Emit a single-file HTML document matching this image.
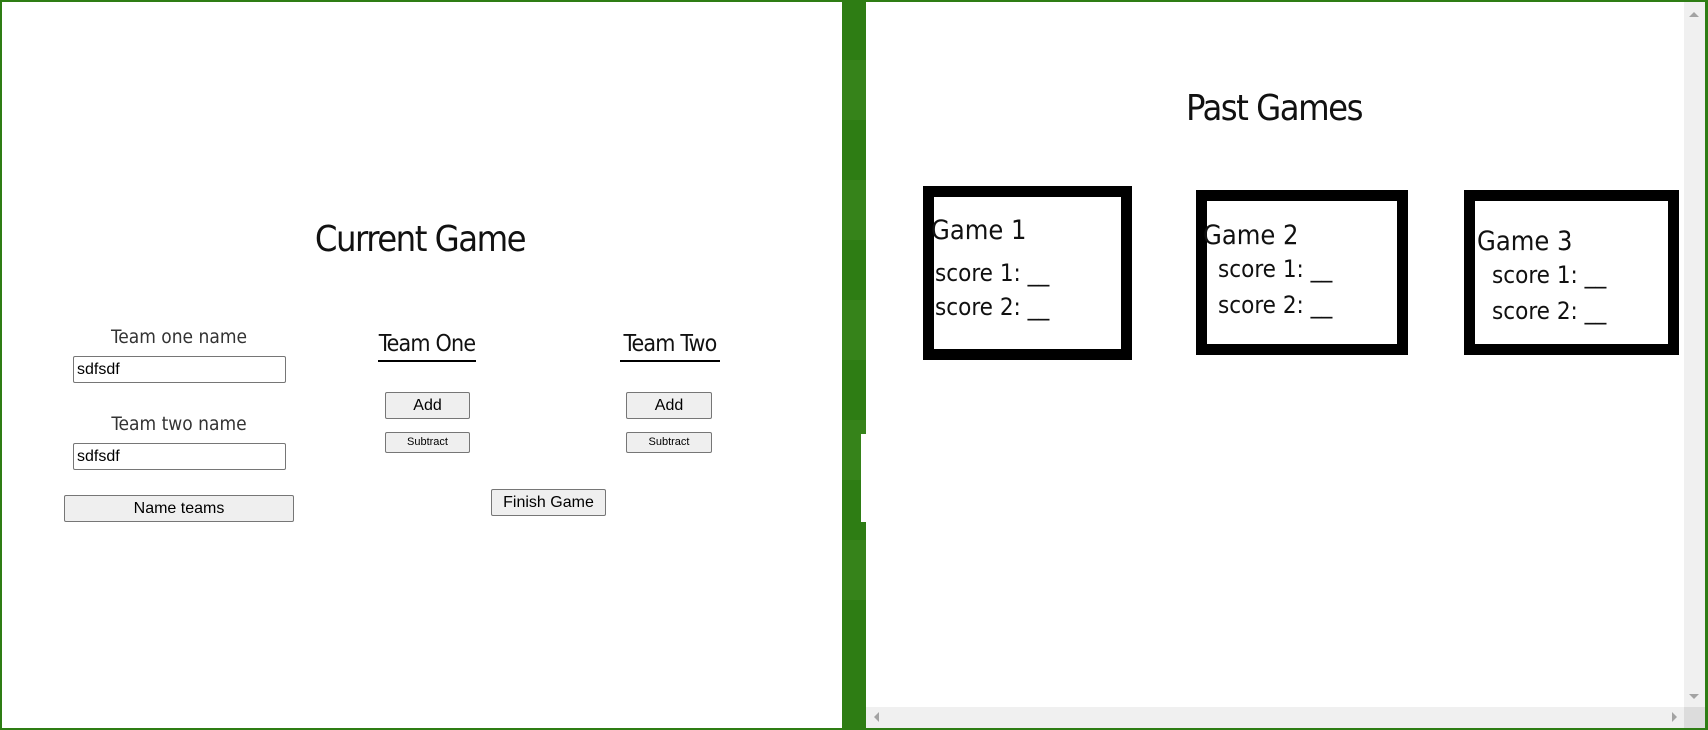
<!DOCTYPE html>
<html><head><style>
*{margin:0;padding:0;box-sizing:border-box}
body{width:1708px;height:730px;position:relative;background:#fff;overflow:hidden;font-family:"Liberation Sans",sans-serif}
.a{position:absolute}
.t{font-family:"DejaVu Sans Condensed","Liberation Sans",sans-serif;color:#111;white-space:nowrap}
.btn{position:absolute;background:#efefef;border:1px solid #767676;border-radius:2px;font-family:"Liberation Sans",sans-serif;color:#000;text-align:center;white-space:nowrap}
.inp{position:absolute;border:1px solid #767676;border-radius:2px;background:#fff;font-size:16px;padding-left:3px;line-height:25px}
.box{position:absolute;border:11px solid #000}
.gt{position:absolute;font-family:"DejaVu Sans Condensed",sans-serif;color:#111;white-space:nowrap}
</style></head><body>
<div class="a" style="left:0;top:0;width:1708px;height:2px;background:#2e7d14"></div>
<div class="a" style="left:0;top:728px;width:1708px;height:2px;background:#2e7d14"></div>
<div class="a" style="left:0;top:0;width:2px;height:730px;background:#2e7d14"></div>
<div class="a" style="left:1705px;top:0;width:3px;height:730px;background:#2e7d14"></div>
<div class="a" style="left:842px;top:0;width:24px;height:730px;background:#2e7d14"></div>
<div class="a" style="left:842px;top:60px;width:24px;height:60px;background:#36831a"></div>
<div class="a" style="left:842px;top:180px;width:24px;height:60px;background:#36831a"></div>
<div class="a" style="left:842px;top:300px;width:24px;height:60px;background:#36831a"></div>
<div class="a" style="left:842px;top:420px;width:24px;height:60px;background:#36831a"></div>
<div class="a" style="left:842px;top:540px;width:24px;height:60px;background:#36831a"></div>
<div class="a" style="left:861px;top:434px;width:5px;height:88px;background:#fff"></div>
<div class="a" style="left:1684px;top:2px;width:21px;height:705px;background:#f0f0f0"></div>
<div class="a" style="left:866px;top:707px;width:818px;height:21px;background:#f0f0f0"></div>
<div class="a" style="left:1684px;top:707px;width:21px;height:21px;background:#dcdcdc"></div>
<div class="a" style="left:1689px;top:12px;border:5px solid transparent;border-bottom-color:#a3a3a3;border-top:0"></div>
<div class="a" style="left:1689px;top:694px;border:5px solid transparent;border-top-color:#a3a3a3;border-bottom:0"></div>
<div class="a" style="left:1672px;top:712px;border:5px solid transparent;border-left-color:#a3a3a3;border-right:0"></div>
<div class="a" style="left:874px;top:712px;border:5px solid transparent;border-right-color:#a3a3a3;border-left:0"></div>

<div class="t a" style="left:220px;width:400px;top:219px;font-size:36px;text-align:center;letter-spacing:-1.5px">Current Game</div>
<div class="t a" style="left:79px;width:200px;top:326px;font-size:19px;text-align:center;color:#333">Team one name</div>
<div class="inp" style="left:73px;top:356px;width:213px;height:27px">sdfsdf</div>
<div class="t a" style="left:79px;width:200px;top:413px;font-size:19px;text-align:center;color:#333">Team two name</div>
<div class="inp" style="left:73px;top:443px;width:213px;height:27px">sdfsdf</div>
<div class="btn" style="left:64px;top:495px;width:230px;height:27px;font-size:16px;line-height:25px">Name teams</div>

<div class="t a" style="left:378px;width:98px;top:331px;font-size:23px;text-align:center;letter-spacing:-0.8px">Team One</div>
<div class="a" style="left:378px;top:360px;width:98px;height:2px;background:#000"></div>
<div class="t a" style="left:620px;width:100px;top:331px;font-size:23px;text-align:center;letter-spacing:-0.8px">Team Two</div>
<div class="a" style="left:620px;top:360px;width:100px;height:2px;background:#000"></div>

<div class="btn" style="left:385px;top:392px;width:85px;height:27px;font-size:16px;line-height:25px">Add</div>
<div class="btn" style="left:385px;top:432px;width:85px;height:21px;font-size:11px;line-height:19px">Subtract</div>
<div class="btn" style="left:626px;top:392px;width:86px;height:27px;font-size:16px;line-height:25px">Add</div>
<div class="btn" style="left:626px;top:432px;width:86px;height:21px;font-size:11px;line-height:19px">Subtract</div>
<div class="btn" style="left:491px;top:489px;width:115px;height:27px;font-size:16px;line-height:25px">Finish Game</div>

<div class="t a" style="left:1124px;width:300px;top:88px;font-size:36px;text-align:center;letter-spacing:-1.5px">Past Games</div>

<div class="box" style="left:923px;top:186px;width:209px;height:174px"></div>
<div class="gt" style="left:931px;top:215px;font-size:27px">Game 1</div>
<div class="gt" style="left:935px;top:259px;font-size:24px">score 1: __</div>
<div class="gt" style="left:935px;top:293px;font-size:24px">score 2: __</div>

<div class="box" style="left:1196px;top:190px;width:212px;height:165px"></div>
<div class="gt" style="left:1203px;top:220px;font-size:27px">Game 2</div>
<div class="gt" style="left:1218px;top:255px;font-size:24px">score 1: __</div>
<div class="gt" style="left:1218px;top:291px;font-size:24px">score 2: __</div>

<div class="box" style="left:1464px;top:190px;width:215px;height:165px"></div>
<div class="gt" style="left:1477px;top:226px;font-size:27px">Game 3</div>
<div class="gt" style="left:1492px;top:261px;font-size:24px">score 1: __</div>
<div class="gt" style="left:1492px;top:297px;font-size:24px">score 2: __</div>
</body></html>
